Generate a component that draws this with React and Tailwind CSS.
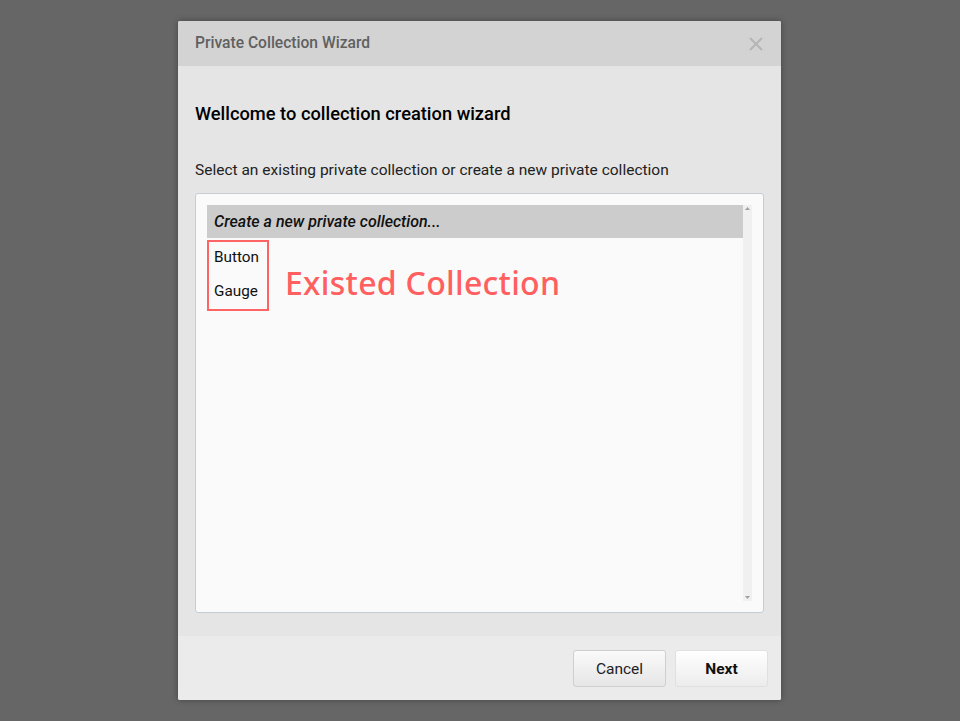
import React, { useState } from "react";

const collections = ["Button", "Gauge"];

const App = () => {
  const [selected, setSelected] = useState(-1);

  return (
    <div
      className="w-[960px] h-[721px] bg-[#666666] flex pl-[178px] pt-[21px]"
      style={{ fontFamily: "Roboto, 'Liberation Sans', sans-serif" }}
    >
      {/* Dialog */}
      <div className="w-[603px] h-[679px] flex flex-col bg-[#e5e5e5] rounded-[2px] shadow-[0_0_6px_rgba(0,0,0,0.35)] overflow-hidden">
        {/* Header */}
        <div className="h-[45px] bg-[#d3d3d3] flex items-center justify-between pl-[17px] pr-[17px]">
          <span className="text-[15.6px] font-medium text-[#606060]">
            Private Collection Wizard
          </span>
          <svg width="16" height="16" viewBox="0 0 16 16" className="text-[#b5b5b5]">
            <path d="M2 2 L14 14 M14 2 L2 14" stroke="currentColor" strokeWidth="2" />
          </svg>
        </div>

        {/* Body */}
        <div className="flex-1 flex flex-col px-[17px]">
          <h2 className="mt-[37px] text-[18.3px] font-medium text-black leading-[22px]">
            Wellcome to collection creation wizard
          </h2>
          <p className="mt-[35px] text-[15.5px] text-[#222] leading-[20px]">
            Select an existing private collection or create a new private collection
          </p>

          {/* List box */}
          <div className="mt-[13px] h-[420px] bg-[#fafafa] border border-[#c5ccd6] rounded-[3px] flex pl-[11px] pr-[11px] py-[11px]">
            <div className="flex-1 flex flex-col">
              <div
                onClick={() => setSelected(-1)}
                className="h-[33px] bg-[#cccccc] flex items-center pl-[7px] text-[16px] italic font-medium text-[#111] cursor-pointer"
              >
                Create a new private collection...
              </div>
              <div className="flex items-start mt-[2px]">
                <div className="border-2 border-[#ff6464] w-[62px] h-[71px] flex flex-col pl-[5px] pt-[4px] gap-[12px]">
                  {collections.map((c, i) => (
                    <div
                      key={c}
                      onClick={() => setSelected(i)}
                      className={`text-[15.3px] leading-[22px] text-[#111] cursor-pointer ${selected === i ? "bg-[#cccccc]" : ""}`}
                    >
                      {c}
                    </div>
                  ))}
                </div>
                <span
                  className="ml-[16px] mt-[23px] text-[32px] leading-[40px] font-medium text-[#ff5f5f] tracking-[0.3px]"
                  style={{ fontFamily: "'Noto Sans', 'Liberation Sans', sans-serif" }}
                >
                  Existed Collection
                </span>
              </div>
            </div>
            {/* Scrollbar */}
            <div className="w-[9px] bg-[#f0f0f0] flex flex-col items-center justify-between py-[2px]">
              <svg width="5" height="3" viewBox="0 0 5 3"><path d="M0 3 L2.5 0 L5 3 Z" fill="#a0a0a0" /></svg>
              <svg width="5" height="3" viewBox="0 0 5 3"><path d="M0 0 L2.5 3 L5 0 Z" fill="#a0a0a0" /></svg>
            </div>
          </div>
        </div>

        {/* Footer */}
        <div className="h-[64px] bg-[#ebebeb] flex items-start justify-end gap-[9px] pt-[14px] pr-[13px]">
          <button className="w-[93px] h-[37px] pt-[2px] rounded-[3px] border border-[#cfcfcf] bg-gradient-to-b from-[#fafafa] to-[#e6e6e6] text-[15.5px] text-[#222]">
            Cancel
          </button>
          <button className="w-[93px] h-[37px] pt-[2px] rounded-[3px] border border-[#e0e0e0] bg-gradient-to-b from-[#ffffff] to-[#ececec] text-[15.5px] font-bold text-[#111]">
            Next
          </button>
        </div>
      </div>
    </div>
  );
};

export default App;
